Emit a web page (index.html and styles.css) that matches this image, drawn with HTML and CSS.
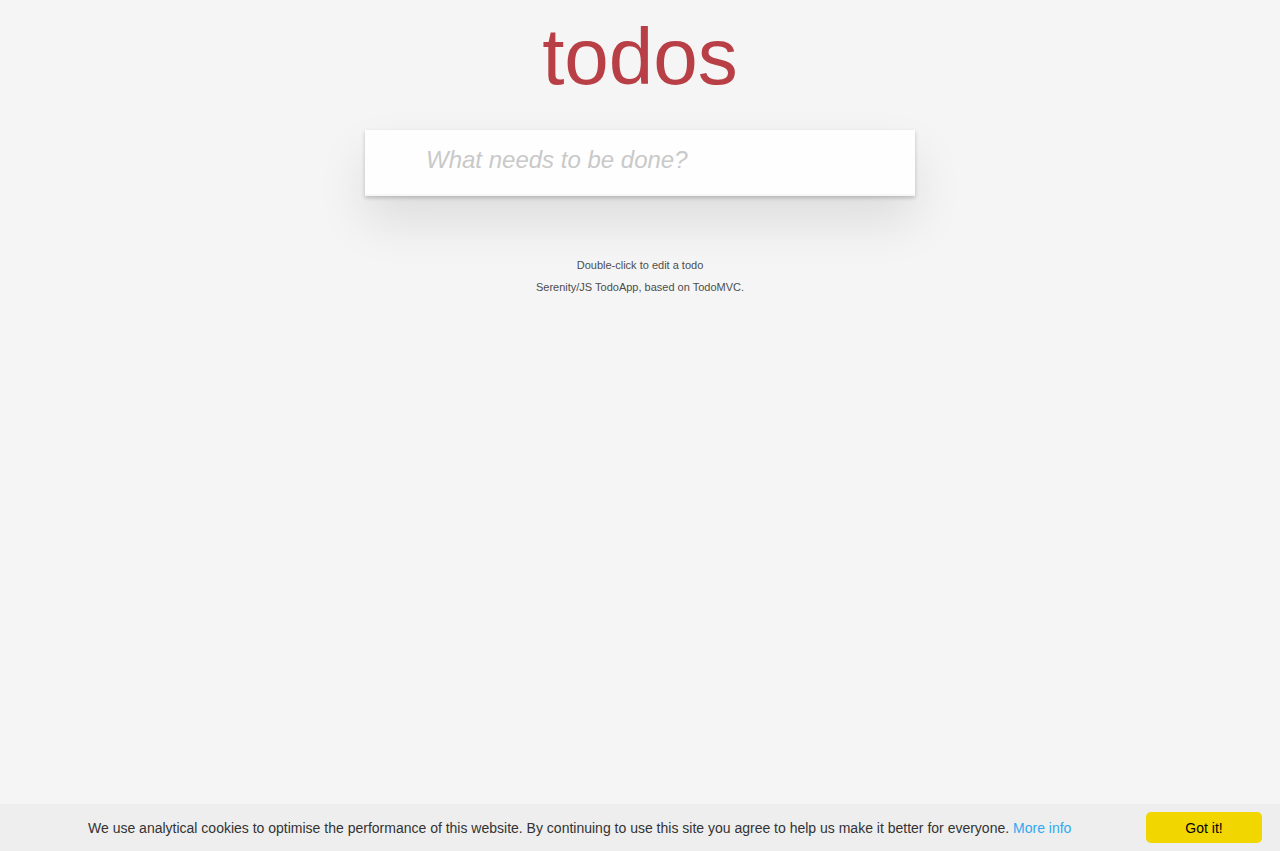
FILE: index.html
```html
<!DOCTYPE html>
<html lang="en">
<head>
<meta charset="utf-8">
<title>Serenity/JS TodoApp</title>
<link rel="stylesheet" href="styles.css">
</head>
<body>
<div class="page">
  <header class="header">
    <h1 class="title">todos</h1>
  </header>
  <section class="todoapp">
    <input class="new-todo" type="text" placeholder="What needs to be done?">
  </section>
  <footer class="info">
    <p>Double-click to edit a todo</p>
    <p>Serenity/JS TodoApp, based on TodoMVC.</p>
  </footer>
</div>
<div class="cookie-bar">
  <span class="cookie-message">We use analytical cookies to optimise the performance of this website. By continuing to use this site you agree to help us make it better for everyone. <a class="cookie-more" href="#">More info</a></span>
  <button class="cookie-btn" type="button">Got it!</button>
</div>
</body>
</html>
```

FILE: styles.css
```css
html, body {
  margin: 0;
  padding: 0;
}
body {
  background: #f5f5f5;
  color: #111;
  font: 14px "Liberation Sans", Arial, Helvetica, sans-serif;
  line-height: 1.4em;
  min-height: 851px;
}
.page {
  max-width: 550px;
  margin: 0 auto;
}
.header {
  height: 130px;
}
.title {
  margin: 0;
  padding-top: 1px;
  font-size: 80px;
  line-height: 112px;
  font-weight: 400;
  text-align: center;
  color: #b83f45;
}
.todoapp {
  background: #fff;
  box-shadow: 0 2px 4px 0 rgba(0, 0, 0, 0.2), 0 25px 50px 0 rgba(0, 0, 0, 0.1);
}
.new-todo {
  display: block;
  box-sizing: border-box;
  width: 100%;
  height: 66px;
  margin: 0;
  padding: 13px 16px 19px 61px;
  border: none;
  outline: none;
  background: rgba(0, 0, 0, 0.003);
  box-shadow: inset 0 -2px 1px rgba(0, 0, 0, 0.03);
  font-family: inherit;
  font-size: 24px;
  line-height: 1.4em;
  color: #4d4d4d;
}
.new-todo::placeholder {
  font-style: italic;
  color: #c9c9c9;
}
.info {
  margin: 64px auto 0;
  color: #4d4d4d;
  font-size: 11px;
  text-align: center;
}
.info p {
  margin: 11px 0;
  line-height: 1;
}
.cookie-bar {
  position: fixed;
  left: 0;
  right: 0;
  bottom: 0;
  height: 47px;
  box-sizing: border-box;
  display: flex;
  align-items: center;
  padding: 0 18px 0 88px;
  background: #eee;
  color: #333;
  font-size: 14px;
}
.cookie-message {
  line-height: 1.5;
  padding-top: 1px;
}
.cookie-more {
  color: #31a8f0;
  text-decoration: none;
}
.cookie-btn {
  margin-left: auto;
  width: 116px;
  height: 31px;
  border: none;
  border-radius: 5px;
  background: #f1d600;
  color: #000;
  font-family: inherit;
  font-size: 14px;
  cursor: pointer;
}
```
